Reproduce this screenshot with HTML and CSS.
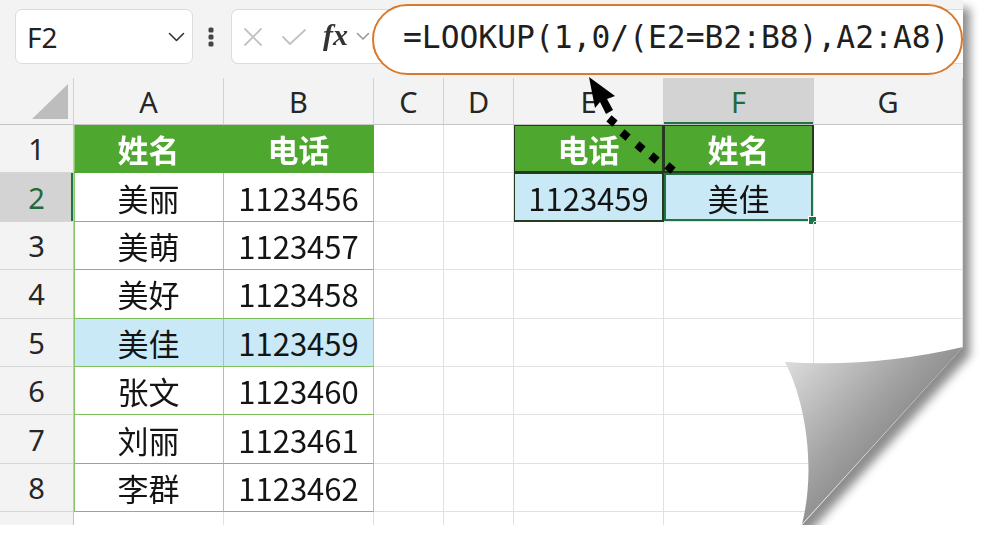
FILE: index.html
```html
<!DOCTYPE html>
<html lang="zh-CN">
<head>
    <meta charset="UTF-8">
    <meta name="viewport" content="width=device-width, initial-scale=1.0">
    <title>LOOKUP 反向查找</title>
    <link rel="stylesheet" href="styles.css">
</head>
<body>
    <div class="page">
        <div class="sheet">
            <div class="toolbar">
                <div class="namebox">
                    <span>F2</span>
                    <svg width="17" height="10" viewBox="0 0 17 10"><path d="M1.5 1.5 8.5 8.5l7-7" fill="none" stroke="#333" stroke-width="1.6" stroke-linecap="round" stroke-linejoin="round"/></svg>
                </div>
                <svg class="more" width="6" height="20" viewBox="0 0 6 20"><rect x="0.5" y="0.5" width="5" height="5" rx="1.5" fill="#444"/><rect x="0.5" y="7.5" width="5" height="5" rx="1.5" fill="#444"/><rect x="0.5" y="14.5" width="5" height="5" rx="1.5" fill="#444"/></svg>
                <div class="fbox">
                    <svg class="ic-x" width="20" height="20" viewBox="0 0 20 20"><path d="M2 2l16 16M18 2 2 18" stroke="#c2c2c2" stroke-width="1.8" stroke-linecap="round"/></svg>
                    <svg class="ic-ok" width="26" height="20" viewBox="0 0 26 20"><path d="M2 10l7 7L24 3" fill="none" stroke="#c2c2c2" stroke-width="1.8" stroke-linecap="round" stroke-linejoin="round"/></svg>
                    <span class="fx">fx</span>
                    <svg class="ic-down" width="14" height="9" viewBox="0 0 14 9"><path d="M1.5 1.5 7 7l5.5-5.5" fill="none" stroke="#999" stroke-width="1.6" stroke-linecap="round" stroke-linejoin="round"/></svg>
                    <div class="formula">=LOOKUP(1,0/(E2=B2:B8),A2:A8)</div>
                </div>
            </div>

            <div class="grid">
                <!-- column headers -->
                <div class="hd corner"><span class="tri"></span></div>
                <div class="hd">A</div>
                <div class="hd">B</div>
                <div class="hd">C</div>
                <div class="hd">D</div>
                <div class="hd">E</div>
                <div class="hd active">F</div>
                <div class="hd">G</div>

                <div class="rh">1</div>
                <div class="c th first">姓名</div>
                <div class="c th">电话</div>
                <div class="c"></div>
                <div class="c"></div>
                <div class="c th box">电话</div>
                <div class="c th box">姓名</div>
                <div class="c"></div>

                <div class="rh active">2</div>
                <div class="c t first">美丽</div>
                <div class="c t">1123456</div>
                <div class="c"></div>
                <div class="c"></div>
                <div class="c hit box">1123459</div>
                <div class="c hit selected">美佳</div>
                <div class="c"></div>

                <div class="rh">3</div>
                <div class="c t first">美萌</div>
                <div class="c t">1123457</div>
                <div class="c"></div>
                <div class="c"></div>
                <div class="c"></div>
                <div class="c"></div>
                <div class="c"></div>

                <div class="rh">4</div>
                <div class="c t first">美好</div>
                <div class="c t">1123458</div>
                <div class="c"></div>
                <div class="c"></div>
                <div class="c"></div>
                <div class="c"></div>
                <div class="c"></div>

                <div class="rh">5</div>
                <div class="c t first hit">美佳</div>
                <div class="c t hit">1123459</div>
                <div class="c"></div>
                <div class="c"></div>
                <div class="c"></div>
                <div class="c"></div>
                <div class="c"></div>

                <div class="rh">6</div>
                <div class="c t first">张文</div>
                <div class="c t">1123460</div>
                <div class="c"></div>
                <div class="c"></div>
                <div class="c"></div>
                <div class="c"></div>
                <div class="c"></div>

                <div class="rh">7</div>
                <div class="c t first">刘丽</div>
                <div class="c t">1123461</div>
                <div class="c"></div>
                <div class="c"></div>
                <div class="c"></div>
                <div class="c"></div>
                <div class="c"></div>

                <div class="rh">8</div>
                <div class="c t first">李群</div>
                <div class="c t">1123462</div>
                <div class="c"></div>
                <div class="c"></div>
                <div class="c"></div>
                <div class="c"></div>
                <div class="c"></div>

                <div class="rh"></div>
                <div class="c"></div>
                <div class="c"></div>
                <div class="c"></div>
                <div class="c"></div>
                <div class="c"></div>
                <div class="c"></div>
                <div class="c"></div>
            </div>
        </div>

        <!-- turned-up corner of the page -->
        <svg class="curl" width="963" height="525" viewBox="0 0 963 525">
            <defs>
                <linearGradient id="flap" gradientUnits="userSpaceOnUse" x1="790" y1="365" x2="905" y2="470">
                    <stop offset="0" stop-color="#d9d9d9"/>
                    <stop offset="0.55" stop-color="#a3a3a3"/>
                    <stop offset="1" stop-color="#7d7d7d"/>
                </linearGradient>
            </defs>
            <path d="M785 362Q872 368 963 347L802 524C816 470 806 402 785 362Z" fill="url(#flap)"/>
        </svg>

        <!-- pointer with dotted trail from F1 up to the formula -->
        <svg class="pointer" width="963" height="525" viewBox="0 0 963 525">
            <path d="M589 77 615 96 607 99 613 110 606 114 600 102 595 108Z" fill="#000"/>
            <g fill="#000">
                <rect x="608" y="117" width="8" height="8" transform="rotate(40 612 121)"/>
                <rect x="621" y="131" width="8" height="8" transform="rotate(40 625 135)"/>
                <rect x="636" y="143" width="8" height="8" transform="rotate(40 640 147)"/>
                <rect x="650" y="154" width="8" height="8" transform="rotate(40 654 158)"/>
                <rect x="666" y="164" width="8" height="8" transform="rotate(40 670 168)"/>
            </g>
        </svg>
    </div>
</body>
</html>
```

FILE: styles.css
```css
body {
    margin: 0;
    background-color: #fff;
    font-family: "Noto Sans", "Noto Sans CJK SC", sans-serif;
    color: #222;
}
.page {
    position: relative;
    width: 963px;
    height: 525px;
    filter: drop-shadow(7px 8px 5px rgba(0,0,0,0.45));
}
.sheet {
    height: 100%;
    background-color: #fff;
    overflow: hidden;
    clip-path: polygon(0 0, 100% 0, 100% 347px, 802px 100%, 0 100%);
}

/* name box + formula bar */
.toolbar {
    height: 78px;
    box-sizing: border-box;
    padding: 9px 0 0 15px;
    display: flex;
    align-items: flex-start;
    background-color: #f3f3f3;
}
.namebox {
    width: 178px;
    height: 55px;
    box-sizing: border-box;
    display: flex;
    align-items: center;
    justify-content: space-between;
    padding: 0 7px 0 11px;
    background-color: #fff;
    border: 1px solid #dcdcdc;
    border-radius: 7px;
    font-size: 28px;
    color: #222;
}
.more {
    margin: 18px 17px 0 15px;
}
.fbox {
    flex: 1;
    height: 55px;
    box-sizing: border-box;
    display: flex;
    align-items: center;
    padding-left: 11px;
    background-color: #fff;
    border: 1px solid #dcdcdc;
    border-right: none;
    border-radius: 7px 0 0 7px;
}
.ic-x {
    margin-right: 18px;
}
.ic-ok {
    margin-right: 16px;
}
.fx {
    font-family: "Liberation Serif", serif;
    font-style: italic;
    font-weight: bold;
    font-size: 30px;
    color: #333;
    margin-right: 8px;
    margin-top: -4px;
}
.ic-down {
    margin-right: 2px;
}
.formula {
    flex: 1;
    align-self: flex-start;
    height: 71px;
    margin-top: -6px;
    box-sizing: border-box;
    padding-left: 29px;
    background-color: #fff;
    border: 2.5px solid #d8792c;
    border-radius: 36px;
    font-family: "DejaVu Sans Mono", "Liberation Mono", monospace;
    font-size: 31.3px;
    line-height: 62px;
    color: #1f1f1f;
    white-space: nowrap;
}

/* worksheet */
.grid {
    display: grid;
    grid-template-columns: 74px 150px 150px 70px 70px 150px 150px 149px;
    grid-template-rows: 47px repeat(9, 48.4px);
}
.grid > div {
    position: relative;
    box-sizing: border-box;
    display: flex;
    align-items: center;
    justify-content: center;
    border-right: 1px solid #e1e1e1;
    border-bottom: 1px solid #e1e1e1;
}
.hd {
    background-color: #f3f3f3;
    border-right-color: #d2d2d2 !important;
    border-bottom-color: #c4c4c4 !important;
    font-size: 29px;
    color: #262626;
}
.rh {
    background-color: #f3f3f3;
    border-right-color: #c4c4c4 !important;
    border-bottom-color: #d6d6d6 !important;
    font-size: 29px;
    color: #262626;
}
.hd.active {
    background-color: #d3d3d3;
    color: #1d6b3a;
    box-shadow: inset 0 -2px #217346;
}
.rh.active {
    background-color: #d3d3d3;
    color: #1d6b3a;
    box-shadow: inset -2px 0 #217346;
}
.tri {
    position: absolute;
    right: 5px;
    bottom: 5px;
    width: 36px;
    height: 35px;
    background-color: #bdbdbd;
    clip-path: polygon(100% 0, 100% 100%, 0 100%);
}
.c {
    font-family: "Noto Sans CJK SC", sans-serif;
    font-size: 31px;
    color: #141414;
}
.c.t {
    border-right-color: #9fd184 !important;
    border-bottom-color: #7dbf5c !important;
}
.c.first {
    box-shadow: inset 1px 0 #8cc66c;
}
.c.th {
    background-color: #4ea72e;
    color: #fff;
    font-weight: bold;
    border-right-color: #4ea72e;
    border-bottom-color: #4ea72e;
}
.c.hit {
    background-color: #cae9f7;
}
.c.box {
    box-shadow: inset 0 0 0 1px #263a20;
    border-right-color: #263a20;
    border-bottom-color: #263a20;
}
.c.selected {
    box-shadow: inset 0 0 0 2px #217346;
}
.c.selected::after {
    content: "";
    position: absolute;
    right: -4px;
    bottom: -4px;
    width: 7px;
    height: 7px;
    background-color: #217346;
    border: 1px solid #fff;
}

/* overlays */
.curl, .pointer {
    position: absolute;
    left: 0;
    top: 0;
    pointer-events: none;
}
```
